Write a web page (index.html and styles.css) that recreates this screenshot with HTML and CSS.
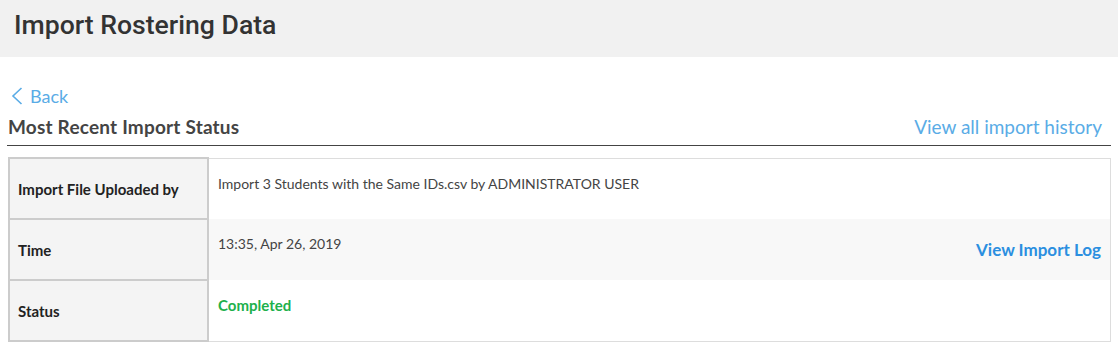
FILE: index.html
```html
<!DOCTYPE html>
<html lang="en">
<head>
<meta charset="utf-8">
<title>Import Rostering Data</title>
<link rel="stylesheet" href="styles.css">
</head>
<body>
<header class="page-header">
  <h1 class="page-title">Import Rostering Data</h1>
</header>
<main class="content">
  <a class="back-link" href="#">
    <svg class="back-icon" width="12" height="18" viewBox="0 0 12 18" aria-hidden="true">
      <path d="M10.5 1 L2 9 L10.5 17" fill="none" stroke="currentColor" stroke-width="1.6"/>
    </svg>
    <span>Back</span>
  </a>
  <div class="section-head">
    <h2 class="section-title">Most Recent Import Status</h2>
    <a class="history-link" href="#">View all import history</a>
  </div>
  <table class="status-table">
    <tr>
      <th>Import File Uploaded by</th>
      <td>Import 3 Students with the Same IDs.csv by ADMINISTRATOR USER</td>
    </tr>
    <tr class="alt">
      <th>Time</th>
      <td>
        <div class="cell-split">
          <span>13:35, Apr 26, 2019</span>
          <a class="log-link" href="#">View Import Log</a>
        </div>
      </td>
    </tr>
    <tr>
      <th>Status</th>
      <td><span class="status-ok">Completed</span></td>
    </tr>
  </table>
</main>
</body>
</html>
```

FILE: styles.css
```css
* { box-sizing: border-box; }

body {
  margin: 0;
  font-family: "Lato", "Liberation Sans", sans-serif;
  color: #444;
  background: #fff;
}

.page-header {
  height: 57px;
  background: #f1f1f1;
  padding: 10px 0 0 14px;
}

.page-title {
  margin: 0;
  font-family: "Roboto", "Liberation Sans", sans-serif;
  font-size: 26.6px;
  font-weight: 500;
  line-height: 30px;
  color: #333;
}

.content {
  padding: 0 7px 0 7px;
}

.back-link {
  display: flex;
  align-items: center;
  gap: 7px;
  margin-top: 27px;
  margin-left: 4px;
  height: 24px;
  font-size: 18px;
  line-height: 24px;
  color: #5aace6;
  text-decoration: none;
}

.back-icon { display: block; }

.section-head {
  display: flex;
  justify-content: space-between;
  align-items: baseline;
  margin-top: 6px;
  padding: 0 9px 5px 1px;
  border-bottom: 1px solid #444;
}

.section-title {
  margin: 0;
  font-size: 19px;
  font-weight: 700;
  letter-spacing: 0.2px;
  line-height: 26px;
  color: #444;
}

.history-link {
  font-size: 19px;
  line-height: 26px;
  color: #5aace6;
  text-decoration: none;
}

.status-table {
  width: calc(100% - 1px);
  margin: 11px 0 0 1px;
  border-collapse: collapse;
  font-size: 14px;
}

.status-table tr { height: 61px; }

.status-table th {
  width: 199px;
  padding: 0 8px;
  text-align: left;
  vertical-align: middle;
  background: #f4f4f4;
  border: 2px solid #cccccc;
  font-size: 15px;
  font-weight: 700;
  color: #222;
}

.status-table td {
  padding: 15px 9px 0 9px;
  vertical-align: top;
  line-height: 20px;
  border-left: 1px solid #dddddd;
  border-right: 1px solid #dddddd;
  color: #444;
}

.status-table tr:first-child td { border-top: 1px solid #dddddd; }
.status-table tr:last-child td { border-bottom: 1px solid #dddddd; }

.status-table tr.alt td { background: #f8f8f8; }

.cell-split {
  display: flex;
  justify-content: space-between;
  align-items: flex-start;
}

.log-link {
  margin-top: 6px;
  font-size: 17px;
  font-weight: 700;
  color: #2b8fe0;
  text-decoration: none;
}

.status-ok {
  font-size: 15px;
  font-weight: 700;
  color: #20b04b;
}
```
